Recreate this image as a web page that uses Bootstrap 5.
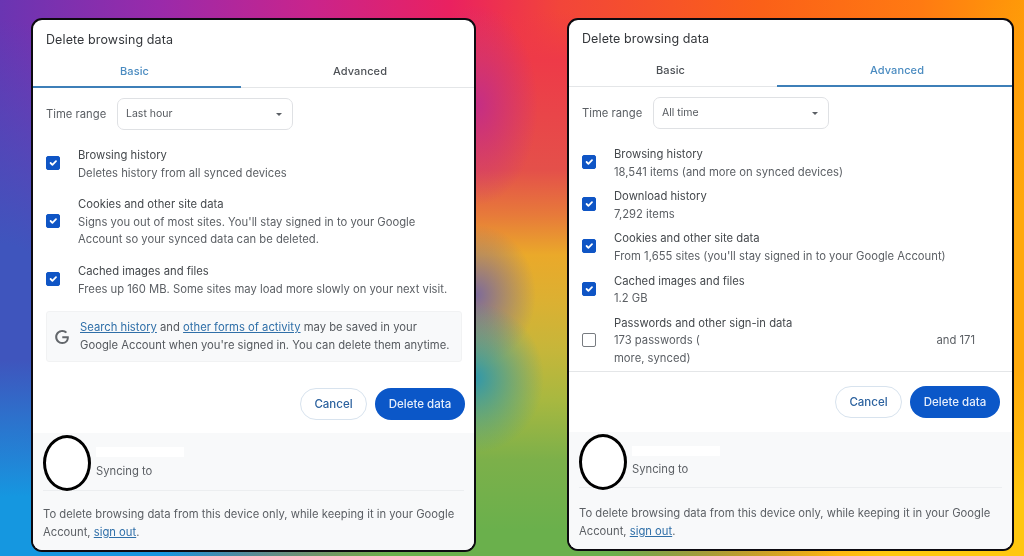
<!DOCTYPE html>
<html lang="en">
<head>
<meta charset="utf-8">
<title>Delete browsing data</title>
<link href="https://cdn.jsdelivr.net/npm/bootstrap@5.3.0/dist/css/bootstrap.min.css" rel="stylesheet">
<style>
html,body{height:100%;}
body{width:1024px;height:556px;overflow:hidden;font-family:Inter,"Liberation Sans",sans-serif;font-size:11.25px;color:#5b5f64;padding:18px 0 0 31px;gap:91px;
background:
 radial-gradient(ellipse 70px 75px at 474px 378px,#2f97ab,rgba(47,151,171,0)),
 radial-gradient(ellipse 60px 70px at 476px 295px,#7d6a9a,rgba(125,106,154,0)),
 radial-gradient(ellipse 60px 100px at 478px 105px,rgba(195,45,135,.95),rgba(195,45,135,0)),
 linear-gradient(180deg,rgba(238,51,80,0) 12px,#ee3a48 60px,#e4504a 170px,#e77a3a 215px,#eaa92a 255px,#dcb032 300px,#c6b63a 350px,#a8b840 400px,#7cb04a 460px,#6ab04c 530px,rgba(106,176,76,0) 556px) 470px 0/105px 100% no-repeat,
 radial-gradient(ellipse 340px 140px at 500px 570px,#6ab04c 35%,transparent),
 radial-gradient(ellipse 420px 200px at 1030px 570px,#ffc70f 35%,transparent),
 radial-gradient(ellipse 260px 300px at 1030px 300px,#ffa90c 30%,transparent),
 radial-gradient(ellipse 420px 210px at 20px 570px,#1597e0 35%,transparent),
 radial-gradient(ellipse 220px 320px at 0 340px,#3f55bd 30%,transparent),
 linear-gradient(90deg,#6a35b2 0,#9a2aaa 160px,#c9248c 310px,#ea2160 450px,#f2453a 560px,#fb6018 760px,#ff7a12 920px,#ff9a08 1024px);
}
.dlg{background:#fff;border:2.5px solid #0c0a10;border-radius:11px;width:445px;height:534px;overflow:hidden;flex:none;filter:blur(.3px);}
.dlg-b{width:447px;height:533px;}
.dlg-head{font-size:12.5px;color:#33363a;padding:12px 0 0 13px;line-height:16px;height:36px;letter-spacing:.1px;}
.dlg-b .dlg-head{padding-top:11px;height:35px;padding-left:13px;}
.tab-row{height:32px;border-bottom:1px solid #e4e6e8;}
.tab-item{display:flex;align-items:center;justify-content:center;font-size:11px;font-weight:500;color:#4d5156;margin-bottom:-1px;border-bottom:2px solid transparent;letter-spacing:.1px;}
.tab-item:first-child{width:208px;flex:none;padding-right:5px;}
.tab-item:last-child{flex:1;padding-left:5px;}
.tab-item.on{color:#4a8bc0;border-bottom-color:#3d7fb8;}
.range-row{padding:10px 0 0 13px;height:42px;}
.range-label{width:71px;color:#5b5f64;}
.range-sel{width:176px;height:32px;border:1.5px solid #dfe1e4;border-radius:7px;padding:0 0 0 8px;color:#55595e;font-size:10.5px;}
.caret-mark{width:0;height:0;border-left:3px solid transparent;border-right:3px solid transparent;border-top:3px solid #5b5f64;margin-left:auto;margin-right:10px;}
.opt{padding-left:13px;display:flex;align-items:center;line-height:17.6px;}
.opt .form-check-input{width:14px;height:14px;margin:0 18px 3px 0;flex:none;border-radius:2px;background-color:#0f55c5;border-color:#0f55c5;}
.opt .form-check-input:not(:checked){background-color:#fff;border:1.5px solid #777b80;}
.opt-title{color:#44484c;}
.a-list{padding-top:17px;}
.a-list .opt{margin-bottom:14px;}
.a-list .opt:last-child{margin-bottom:13px;}
.b-list{padding-top:17px;height:243px;border-bottom:1px solid #e4e6e8;}
.b-list .opt{margin-bottom:7px;}
.note{margin:0 12px 0 13px;height:51px;background:#f8f9fa;border:1px solid #f1f2f3;border-radius:3px;line-height:17.6px;padding:0 0 0 8px;color:#55595e;}
.note svg{flex:none;width:14px;height:14px;margin-right:11px;}
.note a,.tail a{color:#2f6fa8;}
.act{gap:8px;}
.act .btn{height:32px;border-radius:16px;font-size:11.5px;font-weight:500;padding:1px 0 0;line-height:1;}
.act-a{margin-top:26px;padding-right:9px;}
.act-b{margin-top:14px;padding-right:12px;}
.btn-c{width:67px;color:#2b619e;border:1.5px solid #d8e3ee;background:#fff;}
.btn-d{width:90px;color:#e6eefb;background:#0b57c8;border:0;}
.foot{background:#f8f9fa;flex:1;margin-top:13px;padding:2px 10px 0;}
.dlg-b .foot{margin-top:14px;}
.who{height:56px;border-bottom:1px solid #eceef0;gap:5px;}
.dlg-b .who{height:54px;}
.face{width:48px;height:56px;border-radius:50%;border:3px solid #000;background:#fff;flex:none;}
.who-name{width:88px;height:10px;background:#fff;margin-top:12px;}
.who-sub{margin-top:6px;line-height:17px;color:#5b5f64;}
.dlg-b .who-sub{margin-top:5px;}
.tail{line-height:17.6px;padding-top:15px;}
.dlg-b .tail{padding-top:17px;}
.pw-col{padding-right:37px;}
</style>
</head>
<body class="d-flex align-items-start">

<section class="dlg d-flex flex-column">
  <div class="dlg-head">Delete browsing data</div>
  <div class="d-flex tab-row"><div class="tab-item on">Basic</div><div class="tab-item">Advanced</div></div>
  <div class="d-flex align-items-start range-row">
    <div class="range-label align-self-center">Time range</div>
    <div class="range-sel d-flex align-items-center">Last hour<span class="caret-mark"></span></div>
  </div>
  <div class="a-list">
    <div class="opt"><input class="form-check-input" type="checkbox" checked aria-label="Browsing history"><div><div class="opt-title">Browsing history</div><div>Deletes history from all synced devices</div></div></div>
    <div class="opt"><input class="form-check-input" type="checkbox" checked aria-label="Cookies"><div><div class="opt-title">Cookies and other site data</div><div>Signs you out of most sites. You'll stay signed in to your Google<br>Account so your synced data can be deleted.</div></div></div>
    <div class="opt"><input class="form-check-input" type="checkbox" checked aria-label="Cached"><div><div class="opt-title">Cached images and files</div><div>Frees up 160 MB. Some sites may load more slowly on your next visit.</div></div></div>
  </div>
  <div class="note d-flex align-items-center">
    <svg viewBox="0 0 24 24" fill="#63676b"><path d="M12.48 10.92v3.28h7.84c-.24 1.84-.853 3.187-1.787 4.133-1.147 1.147-2.933 2.4-6.053 2.4-4.827 0-8.6-3.893-8.6-8.72s3.773-8.72 8.6-8.72c2.6 0 4.507 1.027 5.907 2.347l2.307-2.307C18.747 1.44 16.133 0 12.48 0 5.867 0 .307 5.387.307 12s5.56 12 12.173 12c3.573 0 6.267-1.173 8.373-3.36 2.16-2.16 2.84-5.213 2.84-7.667 0-.76-.053-1.467-.173-2.053H12.48z"/></svg>
    <div><a href="#">Search history</a> and <a href="#">other forms of activity</a> may be saved in your<br>Google Account when you're signed in. You can delete them anytime.</div>
  </div>
  <div class="d-flex justify-content-end act act-a"><button class="btn btn-c">Cancel</button><button class="btn btn-d">Delete data</button></div>
  <div class="foot">
    <div class="d-flex who"><div class="face"></div><div><div class="who-name"></div><div class="who-sub">Syncing to</div></div></div>
    <div class="tail">To delete browsing data from this device only, while keeping it in your Google<br>Account, <a href="#">sign out</a>.</div>
  </div>
</section>

<section class="dlg dlg-b d-flex flex-column">
  <div class="dlg-head">Delete browsing data</div>
  <div class="d-flex tab-row"><div class="tab-item">Basic</div><div class="tab-item on">Advanced</div></div>
  <div class="d-flex align-items-start range-row">
    <div class="range-label align-self-center">Time range</div>
    <div class="range-sel d-flex align-items-center">All time<span class="caret-mark"></span></div>
  </div>
  <div class="b-list">
    <div class="opt"><input class="form-check-input" type="checkbox" checked aria-label="Browsing history"><div><div class="opt-title">Browsing history</div><div>18,541 items (and more on synced devices)</div></div></div>
    <div class="opt"><input class="form-check-input" type="checkbox" checked aria-label="Download history"><div><div class="opt-title">Download history</div><div>7,292 items</div></div></div>
    <div class="opt"><input class="form-check-input" type="checkbox" checked aria-label="Cookies"><div><div class="opt-title">Cookies and other site data</div><div>From 1,655 sites (you'll stay signed in to your Google Account)</div></div></div>
    <div class="opt"><input class="form-check-input" type="checkbox" checked aria-label="Cached"><div><div class="opt-title">Cached images and files</div><div>1.2 GB</div></div></div>
    <div class="opt"><input class="form-check-input" type="checkbox" aria-label="Passwords"><div class="flex-fill pw-col"><div class="opt-title">Passwords and other sign-in data</div><div class="d-flex justify-content-between"><span>173 passwords (</span><span>and 171</span></div><div>more, synced)</div></div></div>
  </div>
  <div class="d-flex justify-content-end act act-b"><button class="btn btn-c">Cancel</button><button class="btn btn-d">Delete data</button></div>
  <div class="foot">
    <div class="d-flex who"><div class="face"></div><div><div class="who-name"></div><div class="who-sub">Syncing to</div></div></div>
    <div class="tail">To delete browsing data from this device only, while keeping it in your Google<br>Account, <a href="#">sign out</a>.</div>
  </div>
</section>

<script src="https://cdn.jsdelivr.net/npm/bootstrap@5.3.0/dist/js/bootstrap.bundle.min.js"></script>
</body>
</html>
